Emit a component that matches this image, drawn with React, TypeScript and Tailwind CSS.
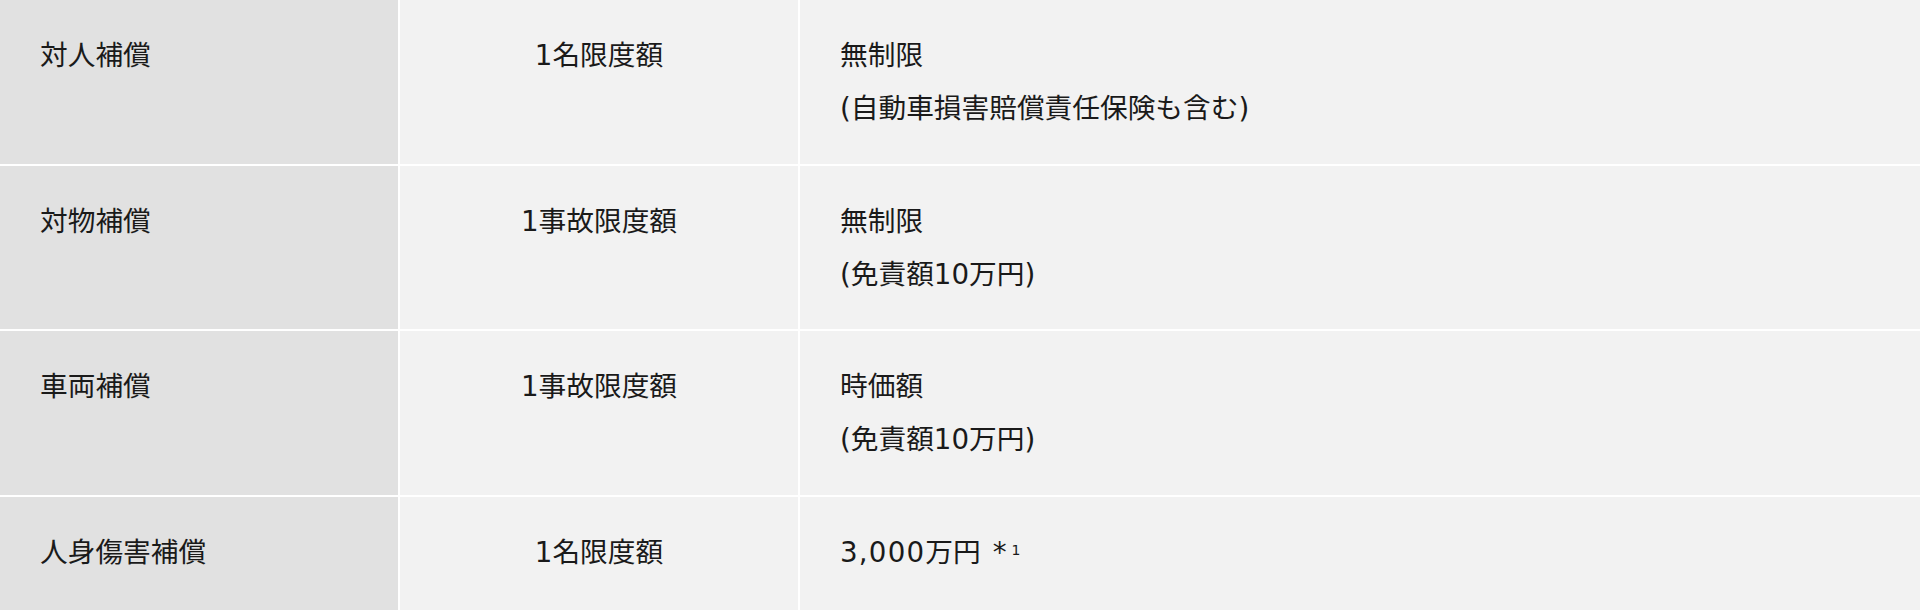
const rows = [
  { label: '対人補償', limit: '1名限度額', value: ['無制限', '(自動車損害賠償責任保険も含む)'] },
  { label: '対物補償', limit: '1事故限度額', value: ['無制限', '(免責額10万円)'] },
  { label: '車両補償', limit: '1事故限度額', value: ['時価額', '(免責額10万円)'] },
  { label: '人身傷害補償', limit: '1名限度額', value: [] as string[], note: true },
];

export default function App() {
  return (
    <div
      className="grid grid-cols-[398px_398px_1fr] gap-[2px] bg-white text-[27.7px] leading-[53px] text-[#1a1a1a]"
      style={{ fontFamily: '"DejaVu Sans", "Noto Sans CJK JP", sans-serif' }}
    >
      {rows.map((row) => (
        <div key={row.label} className="contents">
          <div className="h-[163.7px] bg-[#e1e1e1] pl-[40px] pt-[29px]">
            {row.label}
          </div>
          <div className="h-[163.7px] bg-[#f2f2f2] pt-[29px] text-center">
            {row.limit}
          </div>
          <div className="h-[163.7px] bg-[#f2f2f2] pl-[40px] pt-[29px]">
            {row.note ? (
              <p>
                <span className="tracking-[1.2px]">3,000</span>万円
                <span className="ml-[12px]">*</span>
                <span className="ml-[5px] align-[7px] text-[14px] leading-none">1</span>
              </p>
            ) : (
              row.value.map((line) => <p key={line}>{line}</p>)
            )}
          </div>
        </div>
      ))}
    </div>
  );
}
